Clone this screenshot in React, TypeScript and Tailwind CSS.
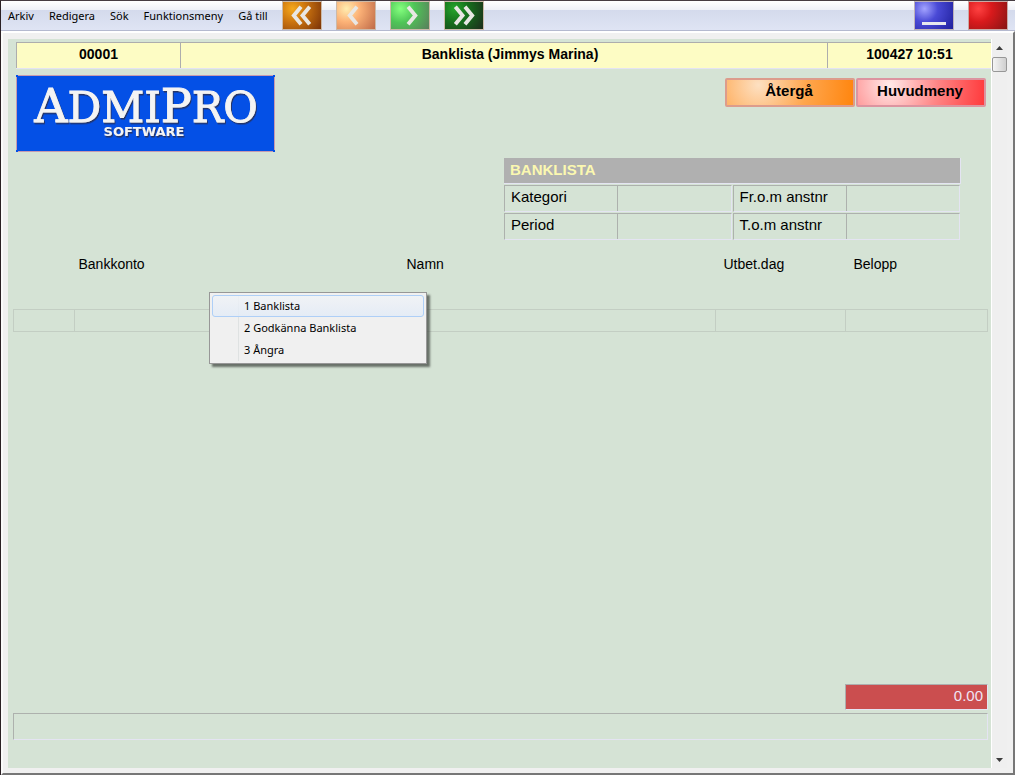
import React from "react";

const menus = ["Arkiv", "Redigera", "Sök", "Funktionsmeny", "Gå till"];

const popupItems = ["1 Banklista", "2 Godkänna Banklista", "3 Ångra"];

const navButtons = [
  {
    label: "Första",
    paths: ["M18 5 L10.500 14 L18 23", "M27 5 L19.500 14 L27 23"],
    look: "bg-[radial-gradient(circle_at_25%_25%,#f5a81c_0%,#c9720f_40%,#7a3208_100%)]",
  },
  {
    label: "Föregående",
    paths: ["M20 5 L12.500 14 L20 23"],
    look: "bg-[radial-gradient(circle_at_25%_25%,#ffedb0_0%,#fcb277_38%,#bf6a48_100%)]",
  },
  {
    label: "Nästa",
    paths: ["M17 5 L24.500 14 L17 23"],
    look: "bg-[radial-gradient(circle_at_25%_25%,#84ff7e_0%,#4fc557_40%,#5b7d5d_100%)]",
  },
  {
    label: "Sista",
    paths: ["M10 5 L17.500 14 L10 23", "M20 5 L27.500 14 L20 23"],
    look: "bg-[radial-gradient(circle_at_25%_25%,#27a52b_0%,#166f1c_40%,#1d2b1c_100%)]",
  },
];

function Logo() {
  return (
    <svg
      width="259"
      height="77"
      viewBox="0 0 259 77"
      role="img"
      aria-label="AdmiPro Software"
      className="block shrink-0"
    >
      <defs>
        <filter id="relief" x="-5%" y="-10%" width="110%" height="130%">
          <feDropShadow dx="1" dy="1.500" stdDeviation="0.700" floodColor="#26305a" floodOpacity="0.900" />
        </filter>
      </defs>
      <rect width="259" height="77" fill="#0450e6" />
      <path d="M2 0.500 H257 M2 76.500 H257 M0.500 2 V75 M258.500 2 V75" fill="none" stroke="#c79bb0" />
      <g filter="url(#relief)" fill="#f4f4f4" textAnchor="middle">
        <text x="130" y="47" fontSize="42" fontFamily="'DejaVu Serif', serif" stroke="#f4f4f4" strokeWidth="0.900">
          <tspan fontSize="46">A</tspan>DMI<tspan fontSize="46">P</tspan>RO
        </text>
        <text x="128" y="61" fontSize="13" fontFamily="'DejaVu Sans', sans-serif" fontWeight="bold">
          SOFTWARE
        </text>
      </g>
    </svg>
  );
}

function Toolbar() {
  return (
    <header className="flex h-[30px] items-stretch border-b border-[#b4b9cf] bg-[linear-gradient(to_bottom,#ffffff_0px,#eef0f7_9px,#d4daec_9px,#dfe4f4_29px)] pr-[7px]">
      <nav className="flex w-[281px] shrink-0 items-center gap-[15px] pt-[2px] pl-[7px] font-['Noto_Sans',sans-serif] text-[11px] whitespace-nowrap">
        {menus.map((m) => (
          <button key={m} type="button">
            {m}
          </button>
        ))}
      </nav>
      <div className="flex gap-[14px]">
        {navButtons.map((b) => (
          <button
            key={b.label}
            type="button"
            aria-label={b.label}
            className={"h-[29px] w-10 border border-[#cbb9a8] " + b.look}
          >
            <svg viewBox="0 0 38 28" className="h-full w-full" fill="none" stroke="#e9e7e4" strokeWidth="4">
              {b.paths.map((d) => (
                <path key={d} d={d} />
              ))}
            </svg>
          </button>
        ))}
      </div>
      <div className="ml-auto flex gap-[14px]">
        <button
          type="button"
          aria-label="Minimera"
          className="flex h-[29px] w-10 items-end justify-center border border-[#bdb1b8] bg-[radial-gradient(circle_at_25%_25%,#a3a3ff_0%,#4a4ad6_38%,#1f1f9c_100%)] pb-1"
        >
          <span className="h-[3px] w-6 bg-[#e8e8ee]" />
        </button>
        <button
          type="button"
          aria-label="Stäng"
          className="h-[29px] w-10 border border-[#c9aaa6] bg-[radial-gradient(circle_at_25%_25%,#ff4242_0%,#d91a1c_38%,#861414_100%)]"
        />
      </div>
    </header>
  );
}

function Field({ id, label }: { id: string; label: string }) {
  return (
    <div className="grid h-[27px] grid-cols-[112px_1fr] border border-t-[#adb1ad] border-r-[#e4e4f2] border-b-[#e4e4f2] border-l-[#adb1ad] text-[15px]">
      <label htmlFor={id} className="pl-[6px] leading-[22px]">
        {label}
      </label>
      <input id={id} className="w-full min-w-0 border-l border-[#adb1ad] bg-transparent px-1 outline-none" />
    </div>
  );
}

function Arrow({ down }: { down?: boolean }) {
  return (
    <svg width="7" height="4" viewBox="0 0 7 4" fill="#3c3c3c">
      <path d={down ? "M0 0 H7 L3.500 4 Z" : "M0 4 H7 L3.500 0 Z"} />
    </svg>
  );
}

function ScrollRail() {
  return (
    <div className="flex w-4 shrink-0 flex-col items-center border-l border-white bg-[#efefef]">
      <button type="button" aria-label="Rulla upp" className="flex h-[18px] w-full items-center justify-center">
        <Arrow />
      </button>
      <div className="h-[15px] w-[15px] rounded-xs border border-[#979797] bg-linear-to-r from-[#f5f5f5] to-[#cfcfcf]" />
      <button type="button" aria-label="Rulla ned" className="mt-auto flex h-[17px] w-full items-center justify-center">
        <Arrow down />
      </button>
    </div>
  );
}

function PopupMenu() {
  return (
    <div
      role="menu"
      className="absolute top-[253px] left-[201px] w-[218px] border border-[#979797] bg-[#f0f0f0] p-[2px] font-['Noto_Sans',sans-serif] text-[11px] shadow-[3px_3px_2px_rgba(70,75,70,0.75)]"
    >
      <div className="bg-[linear-gradient(to_right,transparent_26px,#dfe2e2_26px,#dfe2e2_27px,transparent_27px)]">
        {popupItems.map((item, i) => (
          <button
            key={item}
            role="menuitem"
            type="button"
            className={
              "block h-[22px] w-full rounded-[3px] border pl-[31px] text-left leading-5 " +
              (i === 0 ? "border-[#aecff7] bg-linear-to-b from-[#f0f3f7]/80 to-[#e2ebf7]/80" : "border-transparent")
            }
          >
            {item}
          </button>
        ))}
      </div>
    </div>
  );
}

export default function App() {
  return (
    <div className="flex min-h-screen flex-col border-t border-l border-t-[#463c42] border-l-[#2a2024] bg-[#f0f0f0] font-['Liberation_Sans',Arial,sans-serif] text-[14px] text-black">
      <Toolbar />
      <div className="flex flex-1 border-2 border-t-white border-r-[#777777] border-b-[#777777] border-l-[#fafafa] pt-[6px] pr-[6px] pb-[5px] pl-[5px]">
        <main className="relative flex min-w-0 flex-1 flex-col bg-[#d5e3d5]">
          <div className="mt-[3px] ml-2 grid h-[27px] grid-cols-[164px_1fr_163px] border-t border-b border-t-[#adadad] border-b-[#e4e4f2] bg-[#fdfcc4] text-center leading-[22px] font-bold">
            <span className="border-l border-[#adadad]">00001</span>
            <h1 className="border-x border-[#adadad] pl-[12px]">Banklista (Jimmys Marina)</h1>
            <span>100427 10:51</span>
          </div>

          <div className="mt-[6px] flex items-start justify-between pr-[5px] pl-2">
            <Logo />
            <div className="mt-[3px] flex gap-px text-[15px] font-bold">
              <button
                type="button"
                className="h-[29px] w-[130px] rounded-xs border-2 border-[#dc9c8c] bg-[radial-gradient(circle_at_25%_20%,#fde0c2_0%,#ffa64d_50%,#ff850e_100%)] pr-[2px] pb-1 leading-5"
              >
                Återgå
              </button>
              <button
                type="button"
                className="h-[29px] w-[130px] rounded-xs border-2 border-[#dc94a0] bg-[radial-gradient(circle_at_25%_20%,#ffeaea_0%,#ff8585_50%,#ff3a3c_100%)] pr-[2px] pb-1 leading-5"
              >
                Huvudmeny
              </button>
            </div>
          </div>

          <section className="mt-[6px] mr-[30px] w-[457px] self-end">
            <h2 className="h-[26px] border-r border-b border-[#e4e4f2] bg-[#b0b0b0] pl-[6px] text-[15px] leading-[24px] font-bold text-[#fbf8b0]">
              BANKLISTA
            </h2>
            <div className="mt-px mr-px grid grid-cols-2 gap-x-px gap-y-px">
              <Field id="kategori" label="Kategori" />
              <Field id="from" label="Fr.o.m anstnr" />
              <Field id="period" label="Period" />
              <Field id="tom" label="T.o.m anstnr" />
            </div>
          </section>

          <div className="mt-[10px] mr-[3px] ml-[5px]">
            <table className="w-full table-fixed border-collapse">
              <colgroup>
                <col className="w-[61px]" />
                <col className="w-[324px]" />
                <col />
                <col className="w-[130px]" />
                <col className="w-[142px]" />
              </colgroup>
              <thead>
                <tr className="h-[59px] text-left align-top leading-[28px]">
                  <td />
                  <th className="pl-1 font-normal">Bankkonto</th>
                  <th className="pl-2 font-normal">Namn</th>
                  <th className="pl-2 font-normal">Utbet.dag</th>
                  <th className="pl-2 font-normal">Belopp</th>
                </tr>
              </thead>
              <tbody>
                <tr className="h-[22px]">
                  <td className="border border-[#c3cec3]" />
                  <td className="border border-[#c3cec3]" />
                  <td className="border border-[#c3cec3]" />
                  <td className="border border-[#c3cec3]" />
                  <td className="border border-[#c3cec3]" />
                </tr>
              </tbody>
            </table>
          </div>

          <div className="mt-auto mr-[3px] mb-[28px] ml-[5px] flex flex-col gap-[3px]">
            <output className="block h-[26px] w-[143px] self-end border border-t-[#adadad] border-r-[#e4e4f2] border-b-[#e4e4f2] border-l-[#adadad] bg-[#cb4e4f] pr-1 text-right text-[15px] leading-[22px] text-[#f0e4f4]">
              0.00
            </output>
            <input
              aria-label="Meddelande"
              className="block h-[27px] w-full border border-t-[#adb1ad] border-r-[#e4e4f2] border-b-[#e4e4f2] border-l-[#adb1ad] bg-transparent px-1 outline-none"
            />
          </div>

          <PopupMenu />
        </main>
        <ScrollRail />
      </div>
    </div>
  );
}
